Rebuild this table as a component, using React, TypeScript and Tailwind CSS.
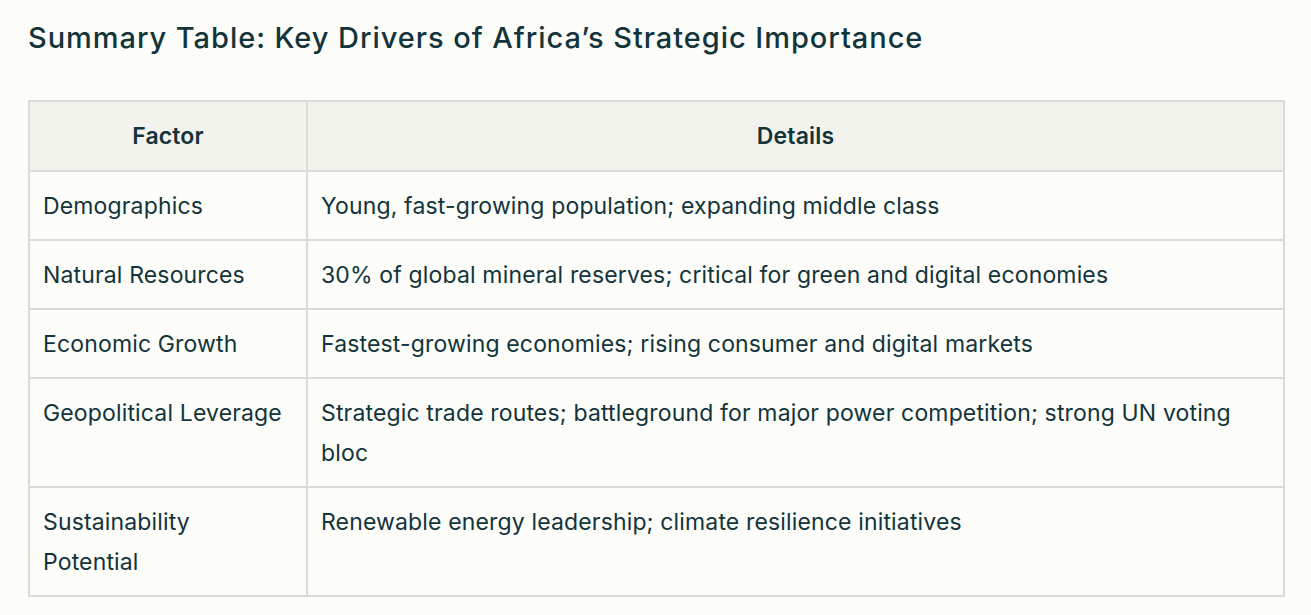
const rows: [string, string][] = [
  ["Demographics", "Young, fast-growing population; expanding middle class"],
  ["Natural Resources", "30% of global mineral reserves; critical for green and digital economies"],
  ["Economic Growth", "Fastest-growing economies; rising consumer and digital markets"],
  ["Geopolitical Leverage", "Strategic trade routes; battleground for major power competition; strong UN voting bloc"],
  ["Sustainability Potential", "Renewable energy leadership; climate resilience initiatives"],
];

export default function App() {
  return (
    <main
      className="min-h-[615px] bg-[#fcfcf9] px-[28px] pt-[18px] text-[#13343b]"
      style={{ fontFamily: "Inter, 'Noto Sans', sans-serif" }}
    >
      <h2 className="text-[29px] font-medium leading-[40px] tracking-[0.95px]">
        Summary Table: Key Drivers of Africa’s Strategic Importance
      </h2>
      <table className="mt-[42px] w-[1257px] border-collapse text-[23px] leading-[40px] tracking-[0.15px]">
        <thead>
          <tr className="bg-[#f3f3ee]">
            <th className="w-[278px] border-2 border-[#dcdcd6] px-[13px] py-[14px] text-center font-semibold">Factor</th>
            <th className="border-2 border-[#dcdcd6] px-[13px] py-[14px] text-center font-semibold">Details</th>
          </tr>
        </thead>
        <tbody>
          {rows.map(([f, d]) => (
            <tr key={f}>
              <td className="border-2 border-[#dcdcd6] py-[13.5px] pl-[13px] pr-[20px] align-top">{f}</td>
              <td className="border-2 border-[#dcdcd6] px-[13px] py-[13.5px] align-top">{d}</td>
            </tr>
          ))}
        </tbody>
      </table>
    </main>
  );
}
